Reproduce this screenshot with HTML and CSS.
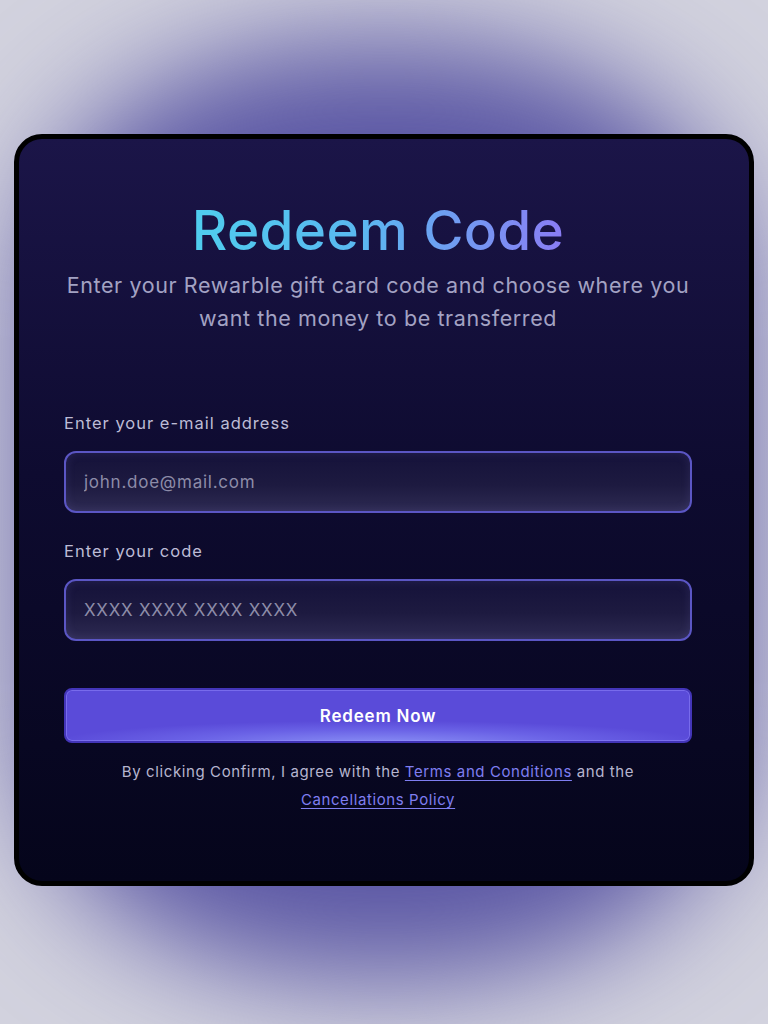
FILE: index.html
```html
<!DOCTYPE html>
<html lang="en">
<head>
<meta charset="utf-8">
<title>Redeem Code</title>
<link rel="stylesheet" href="styles.css">
</head>
<body>
<main class="page">
  <section class="card">
    <h1 class="title">Redeem Code</h1>
    <p class="subtitle">Enter your Rewarble gift card code and choose where you want the money to be transferred</p>
    <form class="form">
      <label class="label" for="email">Enter your e-mail address</label>
      <input class="input" id="email" type="text" placeholder="john.doe@mail.com">
      <label class="label label-second" for="code">Enter your code</label>
      <input class="input" id="code" type="text" placeholder="XXXX XXXX XXXX XXXX">
      <button class="button" type="button">Redeem Now</button>
    </form>
    <p class="terms">By clicking Confirm, I agree with the <a href="#">Terms and Conditions</a> and the <a class="nowrap" href="#">Cancellations Policy</a></p>
  </section>
</main>
</body>
</html>
```
FILE: styles.css
```css
html, body {
  margin: 0;
  padding: 0;
}
body {
  width: 768px;
  height: 1024px;
  overflow: hidden;
  background: radial-gradient(ellipse 60% 50% at 50% 50%, #b4b4cc 0%, #c4c4d6 70%, #d2d2de 100%);
  font-family: Inter, "Noto Sans", sans-serif;
}
.page {
  padding: 134px 14px 0 14px;
}
.card {
  position: relative;
  box-sizing: border-box;
  width: 740px;
  height: 752px;
  border: 5px solid #000;
  border-radius: 28px;
  padding: 60px 57px 0 45px;
  background: linear-gradient(180deg, #1b1548 0%, #0e0b30 45%, #05051b 100%);
  text-align: center;
}
.card::before {
  content: "";
  position: absolute;
  top: -95px;
  bottom: -95px;
  left: 15px;
  right: 15px;
  border-radius: 320px / 220px;
  background: #5a56a4;
  filter: blur(60px);
  z-index: -1;
}
.title {
  margin: 0;
  font-size: 55px;
  line-height: 62px;
  font-weight: 500;
  letter-spacing: 0.3px;
  background: linear-gradient(90deg, #4fcdee 0%, #5ab8f0 45%, #8a7cf4 100%);
  -webkit-background-clip: text;
  background-clip: text;
  color: transparent;
  display: inline-block;
}
.subtitle {
  margin: 8px 0 0 0;
  font-size: 21.5px;
  line-height: 33px;
  letter-spacing: 0.6px;
  color: #a3a2c3;
}
.form {
  display: flex;
  flex-direction: column;
  text-align: left;
  margin-top: 78px;
}
.label {
  font-size: 16.5px;
  line-height: 20px;
  letter-spacing: 1px;
  color: #bdbcd6;
  margin-bottom: 18px;
}
.label-second {
  margin-top: 28px;
}
.input {
  box-sizing: border-box;
  height: 62px;
  width: 100%;
  border: 2px solid #5b56c4;
  border-radius: 12px;
  padding: 0 18px;
  font-family: inherit;
  font-size: 17px;
  letter-spacing: 0.75px;
  color: #fff;
  background: linear-gradient(180deg, #15123a 0%, #1d1a40 55%, #2d2a52 100%);
  box-shadow: inset 0 0 10px rgba(120, 115, 200, 0.18);
  outline: none;
}
.input::placeholder {
  color: #8d8ca8;
}
.button {
  box-sizing: border-box;
  margin-top: 47px;
  height: 55px;
  width: 100%;
  border: 2px solid #4335b8;
  border-radius: 8px;
  background: radial-gradient(ellipse 70% 60% at 50% 105%, #8a90f5 0%, #6a62e6 45%, #5a4bd9 75%), #5a4bd9;
  box-shadow: inset 0 0 0 1px rgba(150, 140, 255, 0.5);
  color: #fff;
  font-family: inherit;
  font-size: 17px;
  letter-spacing: 0.8px;
  font-weight: 600;
}
.terms {
  margin: 15px 0 0 0;
  font-size: 15px;
  line-height: 28px;
  letter-spacing: 0.6px;
  color: #b6b5cf;
}
.terms a {
  color: #7f7ef0;
  text-decoration: underline;
  text-underline-offset: 3px;
}
.terms .nowrap {
  white-space: nowrap;
}
```
